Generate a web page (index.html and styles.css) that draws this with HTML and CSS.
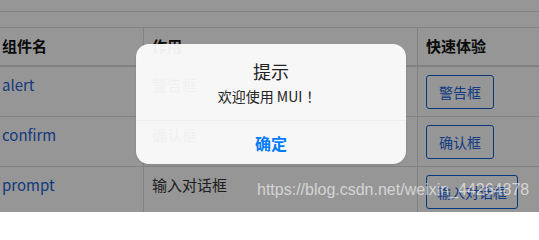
FILE: index.html
```html
<!DOCTYPE html>
<html lang="zh-CN">
<head>
<meta charset="utf-8">
<title>MUI alert</title>
<link rel="stylesheet" href="styles.css">
</head>
<body>
<div class="page">
  <div class="top-rule"></div>
  <div class="grid">
    <div class="cell head c1">组件名</div>
    <div class="cell head c2">作用</div>
    <div class="cell head c3">快速体验</div>

    <div class="cell c1"><a class="link">alert</a></div>
    <div class="cell c2">警告框</div>
    <div class="cell c3"><button class="btn">警告框</button></div>

    <div class="cell c1"><a class="link">confirm</a></div>
    <div class="cell c2">确认框</div>
    <div class="cell c3"><button class="btn">确认框</button></div>

    <div class="cell last c1"><a class="link">prompt</a></div>
    <div class="cell last c2">输入对话框</div>
    <div class="cell last c3"><button class="btn btn-wide">输入对话框</button></div>
  </div>

  <div class="backdrop"></div>

  <div class="popup">
    <div class="popup-inner">
      <div class="popup-title">提示</div>
      <div class="popup-text">欢迎使用 MUI<span class="bang">！</span></div>
    </div>
    <div class="popup-buttons">
      <span class="popup-button">确定</span>
    </div>
  </div>

  <div class="watermark">https://blog.csdn.net/weixin_44264878</div>
</div>
</body>
</html>
```

FILE: styles.css
```css
html, body {
  margin: 0;
  padding: 0;
  background: #ffffff;
}

.page {
  position: relative;
  width: 539px;
  height: 212px;
  overflow: hidden;
  font-family: "Noto Sans CJK SC", "Noto Sans", sans-serif;
  color: #333333;
}

.top-rule {
  height: 11px;
  border-bottom: 1px solid #dddddd;
  margin-bottom: 15px;
}

.grid {
  display: grid;
  grid-template-columns: 150px 274px 140px;
  margin-left: -6px;
  border-top: 1px solid #dddddd;
}

.cell {
  padding: 8px 8px 0 8px;
  height: 41px;
  font-size: 15px;
  line-height: 20px;
  border-bottom: 1px solid #dddddd;
  color: #333333;
  white-space: nowrap;
}

.cell.c1,
.cell.c2 {
  border-right: 1px solid #dddddd;
}

.cell.head {
  height: 29px;
  font-weight: 700;
  color: #111111;
  border-bottom: 2px solid #dddddd;
}

.cell.last {
  height: 60px;
  border-bottom: none;
}

.link {
  color: #1e63d6;
  text-decoration: none;
}

.btn {
  display: block;
  height: 34px;
  padding: 0 12px;
  font-family: "Noto Sans CJK SC", sans-serif;
  font-size: 14px;
  line-height: 20px;
  color: #1a66e0;
  background: transparent;
  border: 1px solid #0a62d6;
  border-radius: 3px;
}

.btn-wide {
  padding: 0 10px;
}

.backdrop {
  position: absolute;
  inset: 0;
  background: rgba(0, 0, 0, 0.41);
}

.popup {
  position: absolute;
  left: 136px;
  top: 44px;
  width: 270px;
  border-radius: 13px;
  overflow: hidden;
  box-shadow: 0 1px 2px rgba(0, 0, 0, 0.12);
}

.popup-inner {
  height: 77px;
  box-sizing: border-box;
  padding: 16px 15px 0;
  background: rgba(252, 252, 252, 0.95);
  border-bottom: 1px solid #ececec;
  text-align: center;
}

.popup-title {
  font-size: 18px;
  line-height: 22px;
  color: #222222;
}

.popup-text {
  margin-top: 5px;
  font-size: 14px;
  line-height: 18px;
  color: #222222;
}

.bang {
  display: inline-block;
  margin-left: 4px;
  margin-right: 4px;
}

.popup-buttons {
  display: flex;
  height: 43px;
  background: rgba(252, 252, 252, 0.95);
}

.popup-button {
  flex: 1;
  display: flex;
  align-items: center;
  justify-content: center;
  font-size: 16px;
  font-weight: 700;
  color: #007aff;
}

.watermark {
  position: absolute;
  left: 257px;
  top: 180px;
  font-family: "Liberation Sans", Arial, sans-serif;
  font-size: 16px;
  line-height: 20px;
  color: rgba(255, 255, 255, 0.6);
  white-space: nowrap;
}
```
